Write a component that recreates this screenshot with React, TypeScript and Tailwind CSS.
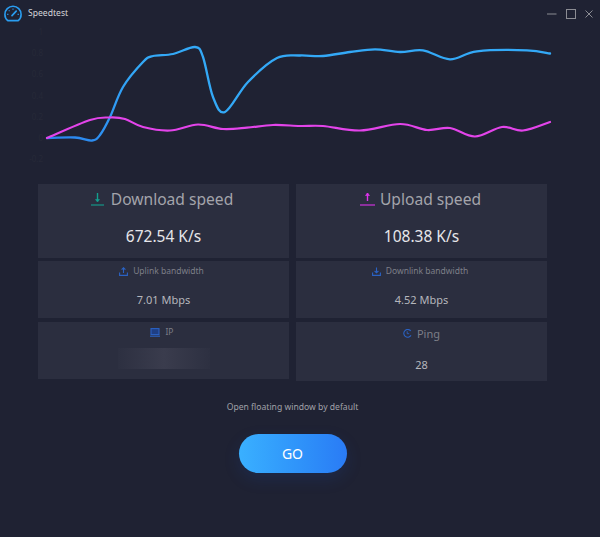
const blue: [number, number][] = [[47,138],[75,137.5],[92,140.5],[100,135],[110,117],[123,87],[143,62],[153,56],[173,54],[195,47],[203,57],[213,97],[225,112],[248,82],[277,58],[300,55.5],[323,56],[350,52],[375,49.3],[400,52],[423,50.3],[450,59.3],[477,51.3],[527,50.3],[550,53.5]];
const pink: [number, number][] = [[47,138],[90,120],[110,117.5],[125,119],[143,127],[170,130.5],[198,124.5],[223,129],[247,127.7],[273,125],[300,126],[323,126],[360,130.5],[400,124],[427,130],[450,128],[475,136.5],[502,127],[523,130.5],[550,122]];

function smooth(p: [number, number][]) {
  let d = `M${p[0][0]} ${p[0][1]}`;
  for (let i = 0; i < p.length - 1; i++) {
    const a = p[Math.max(0, i - 1)], b = p[i], c = p[i + 1], e = p[Math.min(p.length - 1, i + 2)];
    d += ` C${(b[0] + (c[0] - a[0]) / 6).toFixed(1)} ${(b[1] + (c[1] - a[1]) / 6).toFixed(1)} ${(c[0] - (e[0] - b[0]) / 6).toFixed(1)} ${(c[1] - (e[1] - b[1]) / 6).toFixed(1)} ${c[0]} ${c[1]}`;
  }
  return d;
}

const axis: [string, number][] = [["1",32],["0.8",53],["0.6",74],["0.4",96],["0.2",117],["0",138],["-0.2",159]];

function Arrow({ color, up, w }: { color: string; up?: boolean; w: number }) {
  return (
    <svg width={w} height="16" viewBox={`0 0 ${w} 16`} fill="none" className="shrink-0">
      <path d={`M${w / 2} 1V9`} stroke={color} strokeWidth="1.4" />
      <path d={up ? `M${w / 2 - 2} 3.5L${w / 2} 1L${w / 2 + 2} 3.5Z` : `M${w / 2 - 2} 7.5L${w / 2} 10L${w / 2 + 2} 7.5Z`} fill={color} stroke={color} strokeWidth=".6" />
      <path d={`M0 13H${w}`} stroke={color} strokeWidth="1.1" />
    </svg>
  );
}

function Small({ kind }: { kind: "up" | "down" }) {
  return (
    <svg width="9" height="9" viewBox="0 0 9 9" fill="none" className="shrink-0">
      <path d="M.6 5.5V8.4H8.4V5.5" stroke="#2a62c4" strokeWidth="1.1" />
      <path d={kind === "up" ? "M4.5 6V.8M2.6 2.6L4.5.8L6.4 2.6" : "M4.5 .5V5.8M2.6 4L4.5 5.8L6.4 4"} stroke="#2a62c4" strokeWidth="1.1" />
    </svg>
  );
}

function Card({ h, children }: { h: string; children: React.ReactNode }) {
  return <div className={`${h} bg-[#2b2e3f] flex flex-col items-center`}>{children}</div>;
}

export default function App() {
  return (
    <div className="w-[600px] h-[537px] bg-[#1f2233] overflow-hidden flex flex-col font-['Noto_Sans','Open_Sans',sans-serif]">
      <div className="h-[27px] flex items-center pl-[4px] pr-[7px] shrink-0">
        <svg width="18" height="17" viewBox="0 0 18 17" fill="none" className="shrink-0">
          <path d="M3.8 15.6H14.2C16.2 14 17.1 11.7 17.1 9.4C17.1 5 13.5 1.2 9 1.2C4.5 1.2 .9 5 .9 9.4C.9 11.7 1.8 14 3.8 15.6Z" stroke="#2a9df0" strokeWidth="1.6" />
          <path d="M8 10.6L12.2 6.2" stroke="#2a9df0" strokeWidth="1.7" strokeLinecap="round" />
          <path d="M3.2 9.4H4.4M4.8 5.4L5.5 6.1M9 3.6V4.8M13.6 9.4H14.8" stroke="#2a9df0" strokeWidth="1.1" />
        </svg>
        <span className="ml-[6px] text-[8.6px] leading-none text-[#d5d6da]">Speedtest</span>
        <div className="ml-auto flex items-center gap-[9px]">
          <svg width="10" height="10" viewBox="0 0 10 10" fill="none"><path d="M0 5H9.5" stroke="#8b8c93" /></svg>
          <svg width="10" height="10" viewBox="0 0 10 10" fill="none"><rect x=".5" y=".5" width="9" height="9" stroke="#8b8c93" /></svg>
          <svg width="8" height="8" viewBox="0 0 8 8" fill="none"><path d="M.5 .5L7.5 7.5M7.5 .5L.5 7.5" stroke="#8b8c93" /></svg>
        </div>
      </div>
      <svg width="600" height="157" viewBox="0 27 600 157" fill="none" className="block shrink-0">
        <defs>
          <linearGradient id="b" gradientUnits="userSpaceOnUse" x1="47" y1="140" x2="130" y2="60">
            <stop offset="0" stopColor="#2a82ee" />
            <stop offset="1" stopColor="#33a9f7" />
          </linearGradient>
        </defs>
        {axis.map(([t, y]) => (
          <text key={t} x="43" y={y + 3} textAnchor="end" fontSize="8" fill="#262938">{t}</text>
        ))}
        <path d={smooth(blue)} stroke="url(#b)" strokeWidth="2.3" strokeLinecap="round" />
        <path d={smooth(pink)} stroke="#e344ea" strokeWidth="2.2" strokeLinecap="round" />
      </svg>
      <div className="ml-[38px] w-[509px] grid grid-cols-2 gap-x-[7px] items-start">
        <div className="flex flex-col gap-[3px]">
          <Card h="h-[74px]">
            <div className="flex items-center h-[31px] gap-[7px] pr-[3px] text-[#a3a4ab] text-[15.6px] leading-none">
              <Arrow color="#13a08f" w={13} />Download speed
            </div>
            <div className="mt-[11px] text-[15.5px] leading-[20px] text-[#e6e6ea]">672.54 K/s</div>
          </Card>
          <Card h="h-[57px]">
            <div className="flex items-center h-[21px] gap-[5px] pr-[4px] text-[#7d7f88] text-[8.5px] leading-none"><Small kind="up" />Uplink bandwidth</div>
            <div className="mt-[10px] text-[11px] leading-[16px] text-[#b5b6bc]">7.01 Mbps</div>
          </Card>
          <div className="mt-px">
            <Card h="h-[57px]">
              <div className="flex items-center h-[20px] gap-[5px] pr-[3px] text-[#7d7f88] text-[8.5px] leading-none">
                <svg width="10" height="9" viewBox="0 0 10 9" fill="none" className="shrink-0"><rect x="1" y=".6" width="8" height="6" fill="#1f3f84" stroke="#2a62c4" strokeWidth="1.1" /><path d="M0 8.2H10" stroke="#2a62c4" strokeWidth="1.1" /></svg>
                IP
              </div>
              <div className="mt-[6px] w-[92px] h-[21px] bg-gradient-to-r from-[#2d3041] via-[#3a3c4d] to-[#2d3041]" />
            </Card>
          </div>
        </div>
        <div className="flex flex-col gap-[3px]">
          <Card h="h-[74px]">
            <div className="flex items-center h-[31px] gap-[5px] pr-[2px] text-[#a3a4ab] text-[15.6px] leading-none">
              <Arrow color="#dd33ec" up w={15} />Upload speed
            </div>
            <div className="mt-[11px] text-[15.5px] leading-[20px] text-[#e6e6ea]">108.38 K/s</div>
          </Card>
          <Card h="h-[57px]">
            <div className="flex items-center h-[21px] gap-[5px] pr-[3px] text-[#7d7f88] text-[8.5px] leading-none"><Small kind="down" />Downlink bandwidth</div>
            <div className="mt-[10px] text-[11px] leading-[16px] text-[#b5b6bc]">4.52 Mbps</div>
          </Card>
          <div className="mt-px">
            <Card h="h-[59px]">
              <div className="flex items-center h-[23px] gap-[5px] text-[#7d7f88] text-[11px] leading-none">
                <svg width="9" height="9" viewBox="0 0 9 9" fill="none" className="shrink-0"><path d="M7.8 2A3.9 3.9 0 1 0 8 6.4" stroke="#2a62c4" strokeWidth="1.1" /><path d="M4.2 2.3V4.7H6.2" stroke="#2a62c4" strokeWidth=".9" /></svg>
                Ping
              </div>
              <div className="mt-[12px] text-[11px] leading-[16px] text-[#b5b6bc]">28</div>
            </Card>
          </div>
        </div>
      </div>
      <div className="mt-[20px] text-center text-[8.6px] leading-[12px] text-[#a0a1a8] pr-[15px]">Open floating window by default</div>
      <div className="mt-[21px] flex justify-center pr-[15px]">
        <button className="w-[108px] h-[39px] rounded-full bg-gradient-to-r from-[#3ab0ff] to-[#2a7bf5] text-white text-[14px] shadow-[0_6px_16px_rgba(30,80,180,0.18)]">GO</button>
      </div>
    </div>
  );
}
